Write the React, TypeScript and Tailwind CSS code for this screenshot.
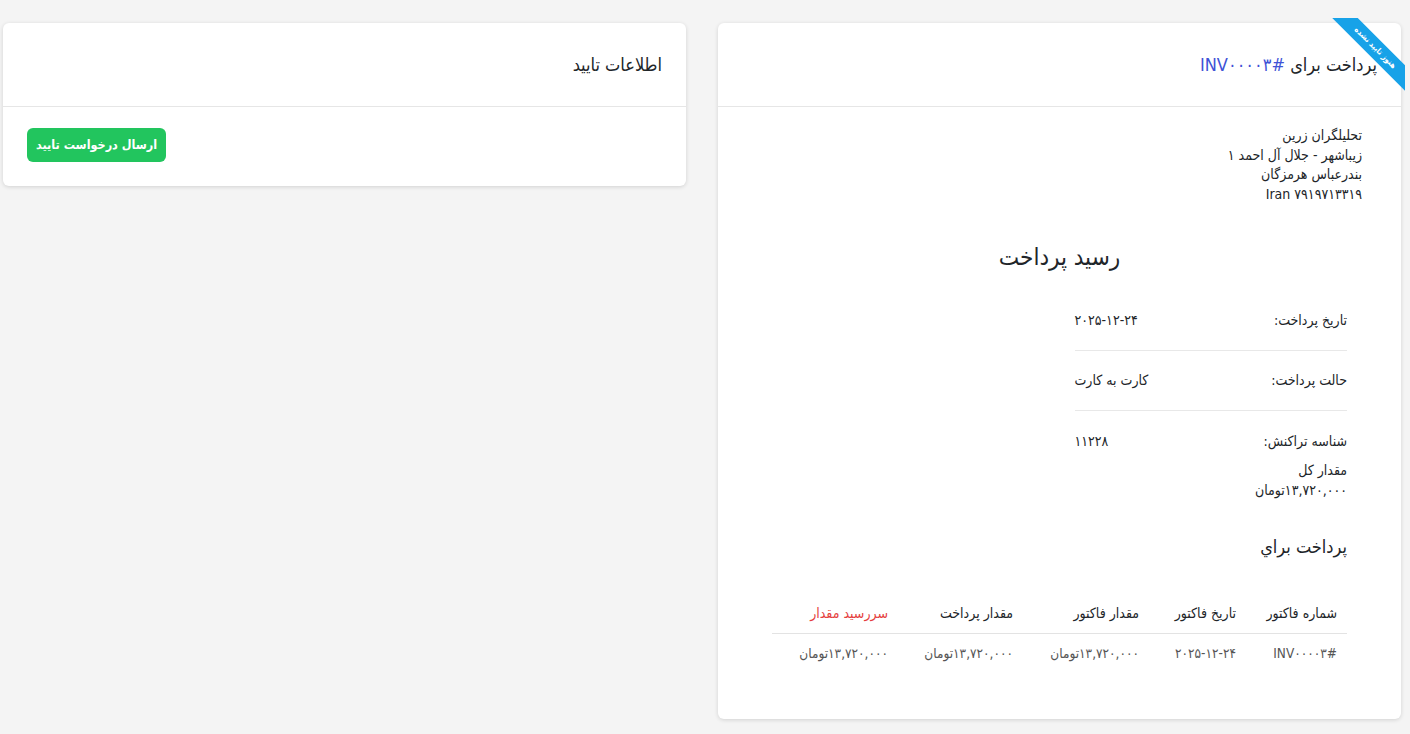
const font = { fontFamily: '"DejaVu Sans Condensed", "DejaVu Sans", sans-serif' };

const rows = [
  { label: "تاریخ پرداخت:", value: "۲۰۲۵-۱۲-۲۴" },
  { label: "حالت پرداخت:", value: "کارت به کارت" },
  { label: "شناسه تراکنش:", value: "۱۱۲۲۸" },
];

const cols = [
  { title: "شماره فاکتور", value: "INV۰۰۰۰۳#", w: "w-[101px]", red: false },
  { title: "تاریخ فاکتور", value: "۲۰۲۵-۱۲-۲۴", w: "w-[97px]", red: false },
  { title: "مقدار فاکتور", value: "۱۳,۷۲۰,۰۰۰تومان", w: "w-[126px]", red: false },
  { title: "مقدار پرداخت", value: "۱۳,۷۲۰,۰۰۰تومان", w: "w-[125px]", red: false },
  { title: "سررسید مقدار", value: "۱۳,۷۲۰,۰۰۰تومان", w: "w-[126px]", red: true },
];

export default function App() {
  return (
    <div
      dir="rtl"
      style={font}
      className="min-h-screen bg-[#f4f4f4] pt-[23px] pr-[9px] pl-[3px] text-[#212529]"
    >
      <div className="grid grid-cols-2 gap-8 items-start">
        {/* receipt card */}
        <div className="relative bg-white rounded-md shadow-[0_1px_4px_rgba(0,0,0,0.14)]">
          <div className="absolute -top-[5px] -right-[4px] w-[73px] h-[73px] overflow-hidden">
            <div className="absolute left-[-12px] top-[21px] w-[110px] h-[18px] rotate-45 bg-[#17a2e8] text-white text-[8px] font-bold flex items-center justify-center">
              هنوز تایید نشده
            </div>
          </div>
          <div className="h-[84px] flex items-center px-6 border-b border-[#e6e6e6]">
            <h2 className="text-[18px]">
              پرداخت برای <span className="text-[#4052d6]">#INV۰۰۰۰۳</span>
            </h2>
          </div>
          <div className="px-[39px] pt-[19px] pb-[56px]">
            <div className="text-[14px] leading-[19.5px]">
              <div>تحلیلگران زرین</div>
              <div>زیباشهر - جلال آل احمد ۱</div>
              <div>بندرعباس هرمزگان</div>
              <div>Iran ۷۹۱۹۷۱۳۳۱۹</div>
            </div>
            <h1 className="text-center text-[24px] mt-[35px]">رسید پرداخت</h1>
            <div className="grid grid-cols-2 mt-[16px]">
              <div className="px-[15px]">
                {rows.map((r, i) => (
                  <div
                    key={r.label}
                    className={`flex justify-between items-center text-[14px] h-[60px] ${
                      i < rows.length - 1 ? "border-b border-[#e8e8e8]" : ""
                    }`}
                  >
                    <span>{r.label}</span>
                    <span>{r.value}</span>
                  </div>
                ))}
                <div className="text-[14px] leading-[20px] -mt-[11px]">
                  <div>مقدار کل</div>
                  <div>۱۳,۷۲۰,۰۰۰تومان</div>
                </div>
              </div>
            </div>
            <div className="px-[15px]">
              <h3 className="text-[18px] mt-[33px]">پرداخت براي</h3>
              <table className="w-full mt-[43px] text-[14px] table-fixed">
                <thead>
                  <tr className="border-b border-[#e3e3e3]">
                    {cols.map((c) => (
                      <th
                        key={c.title}
                        className={`${c.w} text-right font-normal px-[10px] pb-[9px] ${
                          c.red ? "text-[#e53e3e]" : ""
                        }`}
                      >
                        {c.title}
                      </th>
                    ))}
                  </tr>
                </thead>
                <tbody>
                  <tr>
                    {cols.map((c) => (
                      <td key={c.title} className="text-right px-[10px] pt-[9px] text-[13.5px] text-[#555]">
                        {c.value}
                      </td>
                    ))}
                  </tr>
                </tbody>
              </table>
            </div>
          </div>
        </div>

        {/* confirm card */}
        <div className="bg-white rounded-md shadow-[0_1px_4px_rgba(0,0,0,0.14)]">
          <div className="h-[84px] flex items-center px-6 border-b border-[#e6e6e6]">
            <h2 className="text-[18px]">اطلاعات تایید</h2>
          </div>
          <div className="px-6 pt-[21px] pb-6 flex justify-end">
            <button className="h-[34px] px-[9px] rounded-md bg-[#22c55e] text-white text-[12.5px] font-bold">
              ارسال درخواست تایید
            </button>
          </div>
        </div>
      </div>
    </div>
  );
}
